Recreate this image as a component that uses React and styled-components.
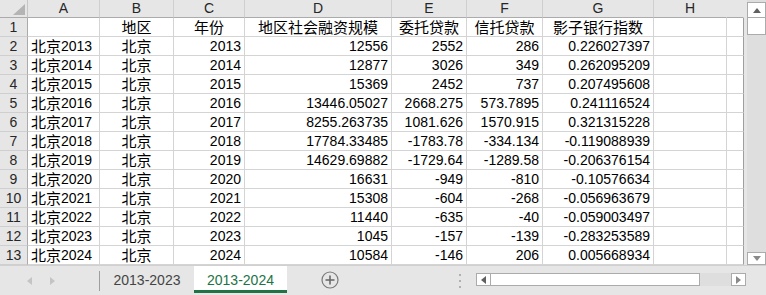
import React from 'react';
import styled, { createGlobalStyle } from 'styled-components';

const GlobalStyle = createGlobalStyle`
  html, body {
    margin: 0;
    padding: 0;
    background: #ffffff;
  }
  body {
    font-family: "Liberation Sans", "Noto Sans CJK SC", sans-serif;
    font-size: 14px;
  }
`

const Window = styled.div`
  width: 766px;
  height: 295px;
  display: flex;
  flex-direction: column;
  overflow: hidden;
  background: #e6e6e6;
`

const Top = styled.div`
  display: flex;
  height: 265px;
`

const Grid = styled.div`
  display: grid;
  grid-template-columns: 28px 72px 74px 71px 147px 75px 76px 111px 73px 17px;
  grid-template-rows: 18px repeat(13, 19px);
  width: 744px;
  background: #ffffff;
`

const Corner = styled.div`
  background: #e6e6e6;
  border-right: 1px solid #c6c6c6;
  border-bottom: 1px solid #ababab;
  box-sizing: border-box;
  display: flex;
  align-items: flex-end;
  justify-content: flex-end;
  padding: 0 2px 2px 0;
`

const ColHead = styled.div`
  background: #e6e6e6;
  box-sizing: border-box;
  border-right: 1px solid ${p => (p.$last ? '#e6e6e6' : '#cfcfcf')};
  border-bottom: 1px solid #ababab;
  color: #262626;
  display: flex;
  align-items: center;
  justify-content: center;
  line-height: 17px;
`

const RowHead = styled.div`
  background: #e6e6e6;
  box-sizing: border-box;
  border-right: 1px solid #ababab;
  border-bottom: 1px solid #cfcfcf;
  color: #262626;
  display: flex;
  align-items: center;
  justify-content: center;
`

const Cell = styled.div`
  box-sizing: border-box;
  border-right: 1px solid ${p => (p.$edge ? '#9e9e9e' : '#d4d4d4')};
  border-bottom: 1px solid #d4d4d4;
  color: #000000;
  white-space: nowrap;
  overflow: hidden;
  display: flex;
  align-items: center;
  padding: 0 3px;
  justify-content: ${p => p.$align === 'right' ? 'flex-end' : p.$align === 'center' ? 'center' : 'flex-start'};
`

const Han = styled.span`
  font-size: 15px;
  line-height: 1;
`

const VScroll = styled.div`
  width: 22px;
  display: flex;
  flex-direction: column;
  padding-left: 3px;
  box-sizing: border-box;
  background: #e6e6e6;
`

const VTrack = styled.div`
  flex: 1;
  display: flex;
  flex-direction: column;
  background: #dedede;
  padding-top: 2px;
`

const ArrowBox = styled.div`
  box-sizing: border-box;
  background: #ffffff;
  border: 1px solid #ababab;
  display: flex;
  align-items: center;
  justify-content: center;
  width: ${p => p.$w}px;
  height: ${p => p.$h}px;
`

const Spacer = styled.div`
  flex: 1;
`

const Thumb = styled.div`
  box-sizing: border-box;
  background: #ffffff;
  border: 1px solid #ababab;
  border-top: none;
  height: 17px;
`

const TabBar = styled.div`
  height: 30px;
  display: flex;
  align-items: stretch;
  background: #e6e6e6;
  border-top: 1px solid #d0d0d0;
  box-sizing: border-box;
`

const NavArea = styled.div`
  width: 100px;
  display: flex;
  align-items: center;
  gap: 18px;
  padding-left: 27px;
  box-sizing: border-box;
  border-right: 1px solid #9e9e9e;
  margin: 5px 0 4px;
`

const Tab = styled.div`
  width: ${p => p.$w}px;
  box-sizing: border-box;
  display: flex;
  align-items: center;
  justify-content: center;
  font-size: 14px;
  color: ${p => (p.$active ? '#217346' : '#444444')};
  background: ${p => (p.$active ? '#ffffff' : 'transparent')};
  border-bottom: ${p => (p.$active ? '3px solid #217346' : 'none')};
  padding-top: ${p => (p.$active ? '3px' : '0')};
  margin-bottom: 2px;
`

const AddArea = styled.div`
  width: 85px;
  display: flex;
  align-items: center;
  justify-content: center;
  padding-bottom: 2px;
`

const Dots = styled.div`
  width: 104px;
  display: flex;
  align-items: center;
  justify-content: flex-end;
  padding-right: 14px;
  box-sizing: border-box;
`

const HScroll = styled.div`
  display: flex;
  align-items: center;
  padding-bottom: 2px;
`

const HTrack = styled.div`
  display: flex;
  height: 13px;
  background: #dedede;
`

const HThumb = styled.div`
  width: 209px;
  box-sizing: border-box;
  background: #ffffff;
  border: 1px solid #ababab;
  border-left: none;
`

const HGap = styled.div`
  width: 31px;
`

const tri = (dir, color = '#8a8a8a') => {
  const pts = {
    up: '0,5 4,0 8,5',
    down: '0,0 4,5 8,0',
    left: '5,0 0,4 5,8',
    right: '0,0 5,4 0,8',
  }[dir]
  const vertical = dir === 'up' || dir === 'down'
  return (
    <svg width={vertical ? 8 : 5} height={vertical ? 5 : 8} viewBox={vertical ? '0 0 8 5' : '0 0 5 8'}>
      <polygon points={pts} fill={color} />
    </svg>
  )
}

// CJK glyphs in the sheet run a touch wider than the Latin digits
const renderText = (text) => {
  if (!text) return ''
  const parts = text.split(/([\u4e00-\u9fff]+)/).filter(Boolean)
  return parts.map((part, i) =>
    /[\u4e00-\u9fff]/.test(part) ? <Han key={i}>{part}</Han> : <span key={i}>{part}</span>
  )
}

const columns = ['A', 'B', 'C', 'D', 'E', 'F', 'G', 'H', '']

const rows = [
  ['', '地区', '年份', '地区社会融资规模', '委托贷款', '信托贷款', '影子银行指数'],
  ['北京2013', '北京', '2013', '12556', '2552', '286', '0.226027397'],
  ['北京2014', '北京', '2014', '12877', '3026', '349', '0.262095209'],
  ['北京2015', '北京', '2015', '15369', '2452', '737', '0.207495608'],
  ['北京2016', '北京', '2016', '13446.05027', '2668.275', '573.7895', '0.241116524'],
  ['北京2017', '北京', '2017', '8255.263735', '1081.626', '1570.915', '0.321315228'],
  ['北京2018', '北京', '2018', '17784.33485', '-1783.78', '-334.134', '-0.119088939'],
  ['北京2019', '北京', '2019', '14629.69882', '-1729.64', '-1289.58', '-0.206376154'],
  ['北京2020', '北京', '2020', '16631', '-949', '-810', '-0.10576634'],
  ['北京2021', '北京', '2021', '15308', '-604', '-268', '-0.056963679'],
  ['北京2022', '北京', '2022', '11440', '-635', '-40', '-0.059003497'],
  ['北京2023', '北京', '2023', '1045', '-157', '-139', '-0.283253589'],
  ['北京2024', '北京', '2024', '10584', '-146', '206', '0.005668934'],
]

const alignFor = (r, c) => {
  if (r === 0) return 'center'
  if (c === 0) return 'left'
  if (c === 1) return 'center'
  return 'right'
}

export default function App() {
  return (
    <>
      <GlobalStyle />
      <Window>
        <Top>
          <Grid>
            <Corner>
              <svg width="12" height="11" viewBox="0 0 12 11">
                <polygon points="12,0 12,11 0,11" fill="#b4b4b4" />
              </svg>
            </Corner>
            {columns.map((c, i) => (
              <ColHead key={'h' + i} $last={i >= columns.length - 2}>{c}</ColHead>
            ))}
            {rows.map((row, r) => (
              <React.Fragment key={r}>
                <RowHead>{r + 1}</RowHead>
                {Array.from({ length: 9 }).map((_, c) => (
                  <Cell key={c} $align={alignFor(r, c)} $edge={c === 8}>
                    {renderText(row[c])}
                  </Cell>
                ))}
              </React.Fragment>
            ))}
          </Grid>
          <VScroll>
            <VTrack>
              <ArrowBox $w={19} $h={16}>{tri('up', '#606060')}</ArrowBox>
              <Thumb />
              <Spacer />
              <ArrowBox $w={19} $h={13}>{tri('down', '#8a8a8a')}</ArrowBox>
            </VTrack>
          </VScroll>
        </Top>
        <TabBar>
          <NavArea>
            {tri('left', '#c4c4c4')}
            {tri('right', '#c4c4c4')}
          </NavArea>
          <Tab $w={94}>2013-2023</Tab>
          <Tab $w={93} $active>2013-2024</Tab>
          <AddArea>
            <svg width="18" height="18" viewBox="0 0 18 18">
              <circle cx="9" cy="9" r="8" fill="none" stroke="#7a7a7a" strokeWidth="1.2" />
              <line x1="9" y1="4.5" x2="9" y2="13.5" stroke="#6a6a6a" strokeWidth="1.6" />
              <line x1="4.5" y1="9" x2="13.5" y2="9" stroke="#6a6a6a" strokeWidth="1.6" />
            </svg>
          </AddArea>
          <Dots>
            <svg width="3" height="14" viewBox="0 0 3 14">
              <rect x="0" y="0" width="2" height="2" fill="#b0b0b0" />
              <rect x="0" y="6" width="2" height="2" fill="#b0b0b0" />
              <rect x="0" y="12" width="2" height="2" fill="#b0b0b0" />
            </svg>
          </Dots>
          <HScroll>
            <HTrack>
              <ArrowBox $w={15} $h={13}>{tri('left', '#606060')}</ArrowBox>
              <HThumb />
              <HGap />
              <ArrowBox $w={15} $h={13}>{tri('right', '#8a8a8a')}</ArrowBox>
            </HTrack>
          </HScroll>
        </TabBar>
      </Window>
    </>
  );
}
